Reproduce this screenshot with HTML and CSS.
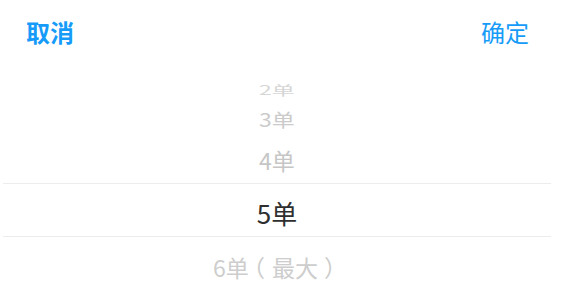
FILE: index.html
```html
<!DOCTYPE html>
<html lang="zh-CN">
<head>
<meta charset="utf-8">
<title>选择单数</title>
<link rel="stylesheet" href="styles.css">
</head>
<body>
<div class="sheet">
  <div class="toolbar">
    <span class="btn btn-cancel">取消</span>
    <span class="btn btn-ok">确定</span>
  </div>
  <div class="picker">
    <div class="wheel">
      <div class="item far"><span>2单</span></div>
      <div class="item near2"><span>3单</span></div>
      <div class="item near1"><span>4单</span></div>
      <div class="item selected"><span>5单</span></div>
      <div class="item below"><span>6单<span class="paren-l">（</span>最大<span class="paren-r">）</span></span></div>
    </div>
  </div>
</div>
</body>
</html>
```
FILE: styles.css
```css
html, body {
  margin: 0;
  padding: 0;
  background: #ffffff;
}
body {
  font-family: "Noto Sans CJK SC", "Noto Sans", sans-serif;
  width: 578px;
  height: 293px;
  overflow: hidden;
}
.sheet {
  width: 554px;
  height: 293px;
  display: flex;
  flex-direction: column;
}
.toolbar {
  height: 84px;
  box-sizing: border-box;
  padding: 19px 25px 0 26px;
  display: flex;
  justify-content: space-between;
  align-items: flex-start;
}
.btn {
  font-size: 24px;
  line-height: 26px;
  color: #169bf8;
}
.btn-cancel {
  font-weight: bold;
}
.btn-ok {
  font-weight: normal;
}
.picker {
  flex: 1;
  overflow: hidden;
  margin: 0 3px;
}
.wheel {
  margin-top: -11px;
  display: flex;
  flex-direction: column;
}
.item {
  display: flex;
  justify-content: center;
  align-items: center;
  box-sizing: border-box;
  padding-top: 6px;
  font-size: 23px;
  line-height: 26px;
  color: #c6c6c6;
}
.item > span {
  display: block;
}
.far {
  height: 28px;
  color: #d6d6d6;
}
.far > span {
  transform: scaleY(0.55);
}
.near2 {
  height: 29px;
  color: #cbcbcb;
}
.near2 > span {
  transform: scaleY(0.8);
}
.near1 {
  height: 53px;
}
.selected {
  height: 54px;
  border-top: 1px solid #ececec;
  border-bottom: 1px solid #ececec;
  font-size: 26px;
  color: #2e2e2e;
}
.below {
  height: 53px;
  color: #cdcdcd;
}
.paren-l,
.paren-r {
  display: inline-block;
}
.paren-l {
  transform: translateX(-7px);
}
.paren-r {
  transform: translateX(6px);
}
```
